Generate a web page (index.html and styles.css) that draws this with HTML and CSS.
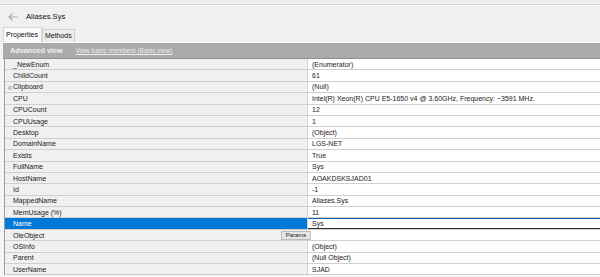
FILE: index.html
```html
<!DOCTYPE html>
<html lang="en">
<head>
    <meta charset="UTF-8">
    <title>Aliases.Sys</title>
    <link rel="stylesheet" href="styles.css">
</head>
<body>
    <div class="topstrip"></div>
    <div class="panel">
        <div class="titlebar">
            <svg class="back" width="10" height="8" viewBox="0 0 10 8">
                <path d="M4.5 0.5 L1 4 L4.5 7.5 M1 4 H9.5" fill="none" stroke="#a8a8a8" stroke-width="1.1"/>
            </svg>
            <span class="title">Aliases.Sys</span>
        </div>
        <div class="tabs">
            <div class="tab active">Properties</div>
            <div class="tab">Methods</div>
        </div>
    </div>

    <div class="viewbar">
        <span class="viewname">Advanced view</span>
        <a href="#" class="viewlink">View basic members (Basic view)</a>
    </div>

    <div class="grid" id="grid"></div>

    <script>
        // property list of the Sys object
        const props = [
            ["_NewEnum", "(Enumerator)"],
            ["ChildCount", "61"],
            ["Clipboard", "(Null)", "dot"],
            ["CPU", "Intel(R) Xeon(R) CPU E5-1650 v4 @ 3.60GHz, Frequency: ~3591 MHz."],
            ["CPUCount", "12"],
            ["CPUUsage", "1"],
            ["Desktop", "(Object)"],
            ["DomainName", "LGS-NET"],
            ["Exists", "True"],
            ["FullName", "Sys"],
            ["HostName", "AOAKDSKSJAD01"],
            ["Id", "-1"],
            ["MappedName", "Aliases.Sys"],
            ["MemUsage (%)", "11"],
            ["Name", "Sys", "selected"],
            ["OleObject", "", "params"],
            ["OSInfo", "(Object)"],
            ["Parent", "(Null Object)"],
            ["UserName", "SJAD"]
        ];

        const grid = document.getElementById('grid');
        props.forEach(p => {
            const row = document.createElement('div');
            row.className = 'row' + (p[2] === 'selected' ? ' selected' : '');
            row.innerHTML = `
                <div class="name">
                    ${p[2] === 'dot' ? '<span class="dot"></span>' : ''}
                    <span>${p[0]}</span>
                    ${p[2] === 'params' ? '<span class="params">Params</span>' : ''}
                </div>
                <div class="value">${p[1]}</div>
            `;
            grid.appendChild(row);
        });
    </script>
</body>
</html>
```

FILE: styles.css
```css
body {
    margin: 0;
    font-family: "Liberation Sans", Arial, sans-serif;
    font-size: 7px;
    color: #1a1a1a;
    background: #f4f4f4;
    overflow: hidden;
}
.topstrip {
    height: 4px;
    background: #ececec;
    border-bottom: 1px solid #d8d8d8;
}
.panel {
    background: #f0f0f0;
    border-top: 1px solid #ffffff;
    height: 36px;
    display: flex;
    flex-direction: column;
    justify-content: space-between;
    border-bottom: 1px solid #ffffff;
}
.titlebar {
    display: flex;
    align-items: center;
    padding: 6px 0 0 8px;
}
.back {
    margin-right: 8px;
}
.title {
    font-size: 7.6px;
    color: #111;
}
.tabs {
    display: flex;
    align-items: flex-end;
    padding-left: 3px;
}
.tab {
    height: 12px;
    line-height: 12px;
    padding: 0 2px;
    border: 1px solid #d0d0d0;
    border-bottom: none;
    background: #ececec;
    color: #111;
}
.tab.active {
    height: 14px;
    line-height: 14px;
    padding: 0 3px 0 2px;
    background: #fbfbfb;
    border-color: #d6d6d6;
}
.viewbar {
    margin-left: 3px;
    height: 15px;
    background: #ababab;
    border-bottom: 1px solid #8e8e94;
    display: flex;
    align-items: center;
    padding-left: 7px;
    gap: 13px;
}
.viewname {
    font-weight: bold;
    color: #f2f2f2;
    font-size: 7.3px;
}
.viewlink {
    color: #ececec;
    font-size: 6.5px;
}
.grid {
    margin-left: 4px;
    border-left: 1px solid #a0a0a0;
    background: #ffffff;
}
.row {
    display: flex;
    height: 11.4px;
    box-sizing: border-box;
    border-bottom: 1px solid #cfcfcf;
    align-items: center;
}
.name {
    width: 303px;
    flex-shrink: 0;
    height: 100%;
    background: #f0f0f0;
    border-right: 1px solid #d4d4d4;
    box-sizing: border-box;
    display: flex;
    align-items: center;
    padding-left: 8px;
    position: relative;
}
.value {
    flex: 1;
    padding-left: 4px;
    background: #ffffff;
}
.dot {
    position: absolute;
    left: 3px;
    top: 3.8px;
    width: 2px;
    height: 2px;
    border-radius: 50%;
    border: 0.6px solid #a8a8a8;
}
.params {
    position: absolute;
    right: -4px;
    top: 1.5px;
    width: 28px;
    height: 7px;
    line-height: 7px;
    font-size: 6px;
    text-align: center;
    background: #e6e6e6;
    border: 1px solid #bcbcbc;
    color: #222;
    z-index: 1;
}
.row.selected .name {
    background: #0078d7;
    color: #ffffff;
}
.row.selected .value {
    height: 100%;
    box-sizing: border-box;
    border-top: 1px solid #0a64b4;
    border-bottom: 1px solid #303030;
    display: flex;
    align-items: center;
}
```
